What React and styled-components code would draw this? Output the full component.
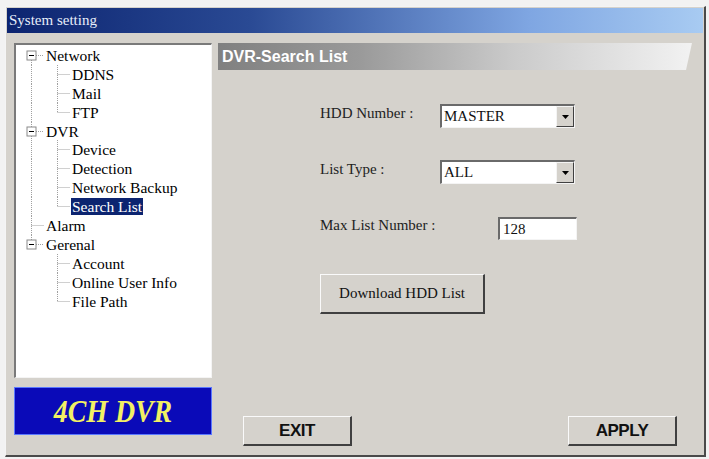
import styled, { createGlobalStyle } from "styled-components";

const GlobalStyle = createGlobalStyle`
  html, body {
    margin: 0;
    padding: 0;
    background: #f2f2f2;
  }
  * {
    box-sizing: border-box;
  }
`;

const treeItems = [
  { label: "Network", cells: ["minusFirst"] },
  { label: "DDNS", cells: ["pipe", "tee"] },
  { label: "Mail", cells: ["pipe", "tee"] },
  { label: "FTP", cells: ["pipe", "elbow"] },
  { label: "DVR", cells: ["minusMid"] },
  { label: "Device", cells: ["pipe", "tee"] },
  { label: "Detection", cells: ["pipe", "tee"] },
  { label: "Network Backup", cells: ["pipe", "tee"] },
  { label: "Search List", cells: ["pipe", "elbow"], selected: true },
  { label: "Alarm", cells: ["teeRoot"] },
  { label: "Gerenal", cells: ["minusLast"] },
  { label: "Account", cells: ["blank", "tee"] },
  { label: "Online User Info", cells: ["blank", "tee"] },
  { label: "File Path", cells: ["blank", "elbow"] },
];

function TreeCell({ type }) {
  const line = { stroke: "#a0a0a0", strokeWidth: 1, strokeDasharray: "1 1" };
  const cx = 13.5;
  const cy = 9.5;
  const box = type.startsWith("minus");
  return (
    <svg width="26" height="19" viewBox="0 0 26 19">
      {(type === "pipe" || type === "tee" || type === "teeRoot") && (
        <line x1={cx} y1="0" x2={cx} y2="19" {...line} />
      )}
      {type === "elbow" && <line x1={cx} y1="0" x2={cx} y2={cy} {...line} />}
      {(type === "tee" || type === "elbow" || type === "teeRoot") && (
        <line x1={cx} y1={cy} x2="26" y2={cy} {...line} />
      )}
      {(type === "minusMid" || type === "minusLast") && (
        <line x1={cx} y1="0" x2={cx} y2="5" {...line} />
      )}
      {(type === "minusFirst" || type === "minusMid") && (
        <line x1={cx} y1="14" x2={cx} y2="19" {...line} />
      )}
      {box && (
        <>
          <line x1="18" y1={cy} x2="26" y2={cy} {...line} />
          <rect x="9" y="5" width="9" height="9" fill="#fff" stroke="#8a8a8a" />
          <line x1="11" y1={cy} x2="16" y2={cy} stroke="#000" />
        </>
      )}
    </svg>
  );
}

function Select({ value }) {
  return (
    <SelectBox>
      <SelectText>{value}</SelectText>
      <ArrowButton>
        <svg width="7" height="4" viewBox="0 0 7 4">
          <path d="M0 0h7L3.5 4z" fill="#000" />
        </svg>
      </ArrowButton>
    </SelectBox>
  );
}

export default function App() {
  return (
    <>
      <GlobalStyle />
      <Window>
        <TitleBar>System setting</TitleBar>
        <Body>
          <LeftColumn>
            <TreeBox>
              {treeItems.map((item) => (
                <TreeRow key={item.label}>
                  {item.cells.map((c, i) => (
                    <TreeCell key={i} type={c} />
                  ))}
                  <TreeLabel $selected={item.selected}>{item.label}</TreeLabel>
                </TreeRow>
              ))}
            </TreeBox>
            <LogoBox>
              <LogoText>4CH DVR</LogoText>
            </LogoBox>
          </LeftColumn>
          <RightColumn>
            <Header>DVR-Search List</Header>
            <Form>
              <FormRow>
                <Label>HDD Number :</Label>
                <Select value="MASTER" />
              </FormRow>
              <FormRow>
                <Label>List Type :</Label>
                <Select value="ALL" />
              </FormRow>
              <FormRow>
                <Label>Max List Number :</Label>
                <NumberInput $offset={58}>128</NumberInput>
              </FormRow>
              <DownloadButton>Download HDD List</DownloadButton>
            </Form>
            <Footer>
              <ActionButton>EXIT</ActionButton>
              <ActionButton>APPLY</ActionButton>
            </Footer>
          </RightColumn>
        </Body>
      </Window>
    </>
  );
}

const Window = styled.div`
  margin: 6px 0 0 5px;
  width: 701px;
  height: 451px;
  background: #d5d2cc;
  border-top: 1px solid #f4f4f4;
  border-left: 1px solid #f4f4f4;
  border-right: 2px solid #4a4a4a;
  border-bottom: 2px solid #4a4a4a;
  padding: 1px;
  display: flex;
  flex-direction: column;
`;

const TitleBar = styled.div`
  height: 25px;
  background: linear-gradient(to right, #0c2470 0%, #2a4a94 35%, #7fa6e2 75%, #a8cbf2 100%);
  color: #e8eefa;
  font-family: "Liberation Serif", serif;
  font-size: 15px;
  display: flex;
  align-items: center;
  padding-left: 2px;
`;

const Body = styled.div`
  flex: 1;
  display: flex;
  gap: 6px;
  padding: 10px 0 0 7px;
`;

const LeftColumn = styled.div`
  width: 198px;
  display: flex;
  flex-direction: column;
`;

const TreeBox = styled.div`
  height: 335px;
  background: #fff;
  border-top: 2px solid #7a7a7a;
  border-left: 2px solid #7a7a7a;
  border-right: 1px solid #f4f4f4;
  border-bottom: 1px solid #f4f4f4;
  padding: 1px 0 0 2px;
`;

const TreeRow = styled.div`
  display: flex;
  align-items: center;
  height: 18.9px;
`;

const TreeLabel = styled.span`
  font-family: "Liberation Serif", serif;
  font-size: 15.5px;
  line-height: 17px;
  color: ${(p) => (p.$selected ? "#fff" : "#000")};
  background: ${(p) => (p.$selected ? "#0c2470" : "transparent")};
  padding: 0 1px;
  margin-left: 1px;
  white-space: nowrap;
`;

const LogoBox = styled.div`
  margin-top: 9px;
  height: 48px;
  background: #0a0ab8;
  border: 1px solid #5a78ff;
  display: flex;
  align-items: center;
  justify-content: center;
`;

const LogoText = styled.span`
  font-family: "Liberation Serif", serif;
  font-style: italic;
  font-weight: bold;
  font-size: 32px;
  color: #f2f064;
  display: inline-block;
  transform: scaleX(0.87);
`;

const RightColumn = styled.div`
  width: 474px;
  display: flex;
  flex-direction: column;
`;

const Header = styled.div`
  height: 27px;
  background: linear-gradient(to right, #808080 0%, #9a9a9a 30%, #cacaca 62%, #f2f2f2 100%);
  clip-path: polygon(0 0, 100% 0, calc(100% - 6px) 100%, 0 100%);
  color: #fff;
  font-family: "Liberation Sans", Arial, sans-serif;
  font-weight: bold;
  font-size: 16px;
  display: flex;
  align-items: center;
  padding-left: 4px;
`;

const Form = styled.div`
  margin: 34px 0 0 102px;
  display: flex;
  flex-direction: column;
  gap: 32px;
`;

const FormRow = styled.div`
  display: flex;
  align-items: center;
  height: 24px;
`;

const Label = styled.span`
  width: 120px;
  font-family: "Liberation Serif", serif;
  font-size: 15px;
  color: #222;
  margin-top: -5px;
`;

const SelectBox = styled.div`
  width: 135px;
  height: 24px;
  background: #fff;
  border-top: 2px solid #6a6a6a;
  border-left: 2px solid #6a6a6a;
  border-right: 1px solid #f4f4f4;
  border-bottom: 1px solid #f4f4f4;
  display: flex;
  align-items: center;
`;

const SelectText = styled.span`
  flex: 1;
  font-family: "Liberation Serif", serif;
  font-size: 15px;
  color: #111;
  padding-left: 2px;
`;

const ArrowButton = styled.div`
  width: 18px;
  height: 100%;
  background: #d5d2cc;
  border-top: 1px solid #f4f4f4;
  border-left: 1px solid #f4f4f4;
  border-right: 1px solid #404040;
  border-bottom: 1px solid #404040;
  display: flex;
  align-items: center;
  justify-content: center;
`;

const NumberInput = styled.div`
  margin-left: ${(p) => p.$offset}px;
  width: 79px;
  height: 23px;
  background: #fff;
  border-top: 2px solid #6a6a6a;
  border-left: 2px solid #6a6a6a;
  border-right: 1px solid #f4f4f4;
  border-bottom: 1px solid #f4f4f4;
  font-family: "Liberation Serif", serif;
  font-size: 15px;
  color: #111;
  padding: 2px 0 0 3px;
`;

const RaisedButton = styled.button`
  background: #d5d2cc;
  border-top: 1px solid #fafafa;
  border-left: 1px solid #fafafa;
  border-right: 2px solid #404040;
  border-bottom: 2px solid #404040;
  padding: 0;
  color: #111;
`;

const DownloadButton = styled(RaisedButton)`
  margin-top: 2px;
  width: 165px;
  height: 40px;
  font-family: "Liberation Serif", serif;
  font-size: 15px;
`;

const Footer = styled.div`
  margin-top: auto;
  display: flex;
  justify-content: space-between;
  padding: 0 15px 8px 25px;
`;

const ActionButton = styled(RaisedButton)`
  width: 109px;
  height: 30px;
  font-family: "Liberation Sans", Arial, sans-serif;
  font-weight: bold;
  font-size: 17px;
  letter-spacing: -0.5px;
`;
